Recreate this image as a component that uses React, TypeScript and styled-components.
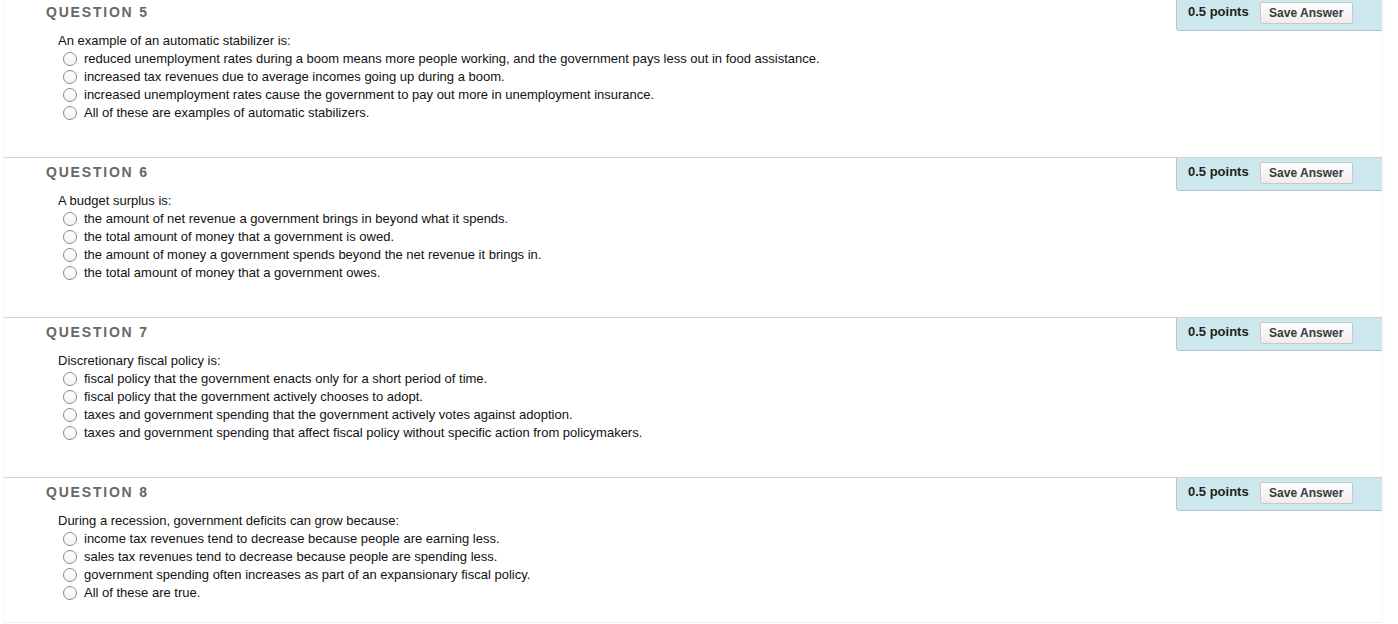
import React from "react";
import styled, { createGlobalStyle } from "styled-components";

const Global = createGlobalStyle`
  html, body { margin: 0; padding: 0; background: #fff; }
  body { font-family: "Liberation Sans", Arial, Helvetica, sans-serif; overflow: hidden; }
`;

const Page = styled.div`
  width: 1378px;
  margin: -3px 0 0 4px;
  box-shadow: 0 1px 3px rgba(0, 0, 0, 0.06);
  border-bottom: 1px solid #eeeeee;
`;

const Block = styled.section<{ $last?: boolean }>`
  border-top: 1px solid #d2d2d2;
  height: ${(p) => (p.$last ? 144 : 159)}px;
  box-sizing: content-box;
`;

const Header = styled.div`
  display: flex;
  justify-content: space-between;
  align-items: flex-start;
  height: 32px;
`;

const Title = styled.h3`
  margin: 0;
  padding: 5px 0 0 42px;
  font-size: 14px;
  line-height: 18px;
  font-weight: bold;
  letter-spacing: 1.8px;
  color: #666666;
`;

const PointsBox = styled.div`
  box-sizing: border-box;
  width: 206px;
  height: 33px;
  background: #cce8ee;
  border-left: 1px solid #b9c4c7;
  border-bottom: 1px solid #b9c4c7;
  border-bottom-left-radius: 4px;
  display: flex;
  align-items: center;
  padding: 0 0 5px 11px;
  gap: 11px;
`;

const Points = styled.span`
  font-size: 13px;
  font-weight: bold;
  color: #222;
`;

const SaveButton = styled.button`
  box-sizing: border-box;
  width: 93px;
  height: 22px;
  padding: 0;
  margin-top: 3px;
  font-family: "Liberation Sans", Arial, sans-serif;
  font-size: 12px;
  font-weight: bold;
  color: #3a3a3a;
  background: linear-gradient(#ffffff, #ececec);
  border: 1px solid #c8c8c8;
  border-radius: 2px;
`;

const Body = styled.div`
  padding: 2px 0 0 54px;
  color: #111;
  font-size: 13px;
  line-height: 18px;
`;

const Prompt = styled.div``;

const Options = styled.ul`
  list-style: none;
  margin: 0;
  padding: 0 0 0 5px;
`;

const Option = styled.li`
  display: flex;
  align-items: center;
  gap: 7px;
  height: 18px;
`;

const Radio = styled.span`
  box-sizing: border-box;
  width: 14px;
  height: 14px;
  border-radius: 50%;
  border: 1px solid #8a8a8a;
  background: linear-gradient(#ffffff, #f4f4f4);
  flex: none;
`;

const questions = [
  {
    n: 5,
    prompt: "An example of an automatic stabilizer is:",
    options: [
      "reduced unemployment rates during a boom means more people working, and the government pays less out in food assistance.",
      "increased tax revenues due to average incomes going up during a boom.",
      "increased unemployment rates cause the government to pay out more in unemployment insurance.",
      "All of these are examples of automatic stabilizers.",
    ],
  },
  {
    n: 6,
    prompt: "A budget surplus is:",
    options: [
      "the amount of net revenue a government brings in beyond what it spends.",
      "the total amount of money that a government is owed.",
      "the amount of money a government spends beyond the net revenue it brings in.",
      "the total amount of money that a government owes.",
    ],
  },
  {
    n: 7,
    prompt: "Discretionary fiscal policy is:",
    options: [
      "fiscal policy that the government enacts only for a short period of time.",
      "fiscal policy that the government actively chooses to adopt.",
      "taxes and government spending that the government actively votes against adoption.",
      "taxes and government spending that affect fiscal policy without specific action from policymakers.",
    ],
  },
  {
    n: 8,
    prompt: "During a recession, government deficits can grow because:",
    options: [
      "income tax revenues tend to decrease because people are earning less.",
      "sales tax revenues tend to decrease because people are spending less.",
      "government spending often increases as part of an expansionary fiscal policy.",
      "All of these are true.",
    ],
  },
];

export default function App() {
  return (
    <>
      <Global />
      <Page>
        {questions.map((q, i) => (
          <Block key={q.n} $last={i === questions.length - 1}>
            <Header>
              <Title>QUESTION {q.n}</Title>
              <PointsBox>
                <Points>0.5 points</Points>
                <SaveButton type="button">Save Answer</SaveButton>
              </PointsBox>
            </Header>
            <Body>
              <Prompt>{q.prompt}</Prompt>
              <Options>
                {q.options.map((o) => (
                  <Option key={o}>
                    <Radio />
                    <span>{o}</span>
                  </Option>
                ))}
              </Options>
            </Body>
          </Block>
        ))}
      </Page>
    </>
  );
}
